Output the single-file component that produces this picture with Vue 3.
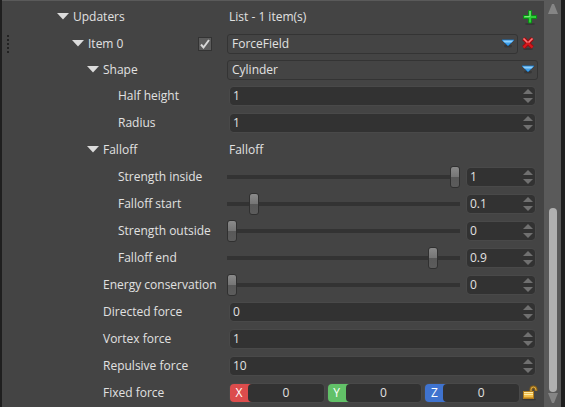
<script setup>
import { reactive } from 'vue'

const rows = reactive([
  { id: 'updaters', label: 'Updaters', level: 0, open: true, kind: 'list', text: 'List - 1 item(s)' },
  { id: 'item', label: 'Item 0', level: 1, open: true, kind: 'item', enabled: true, value: 'ForceField', options: ['ForceField', 'Gravity'] },
  { id: 'shape', label: 'Shape', level: 2, open: true, kind: 'select', value: 'Cylinder', options: ['Cylinder', 'Sphere', 'Torus'] },
  { id: 'half-height', label: 'Half height', level: 3, kind: 'number', value: 1 },
  { id: 'radius', label: 'Radius', level: 3, kind: 'number', value: 1 },
  { id: 'falloff', label: 'Falloff', level: 2, open: true, kind: 'text', text: 'Falloff' },
  { id: 'strength-inside', label: 'Strength inside', level: 3, kind: 'slider', value: 1 },
  { id: 'falloff-start', label: 'Falloff start', level: 3, kind: 'slider', value: 0.1 },
  { id: 'strength-outside', label: 'Strength outside', level: 3, kind: 'slider', value: 0 },
  { id: 'falloff-end', label: 'Falloff end', level: 3, kind: 'slider', value: 0.9 },
  { id: 'energy', label: 'Energy conservation', level: 2, kind: 'slider', value: 0 },
  { id: 'directed', label: 'Directed force', level: 2, kind: 'number', value: 0 },
  { id: 'vortex', label: 'Vortex force', level: 2, kind: 'number', value: 1 },
  { id: 'repulsive', label: 'Repulsive force', level: 2, kind: 'number', value: 10 },
  {
    id: 'fixed', label: 'Fixed force', level: 2, kind: 'vector',
    axes: [{ name: 'X', value: 0 }, { name: 'Y', value: 0 }, { name: 'Z', value: 0 }],
  },
])

function step(row, direction) {
  const size = row.kind === 'slider' ? 0.1 : 1
  const next = Math.round((Number(row.value) + direction * size) * 100) / 100
  row.value = row.kind === 'slider' ? Math.min(1, Math.max(0, next)) : next
}
</script>

<template>
  <div class="window">
    <main class="grid">
      <div v-for="row in rows" :key="row.id" class="row" :class="'row-' + row.kind">
        <div class="name" :class="'level-' + row.level">
          <span v-if="row.kind === 'item'" class="grip"></span>
          <button v-if="row.open" type="button" class="expander" :aria-label="'Collapse ' + row.label">
            <svg width="12" height="7" viewBox="0 0 12 7"><path d="M0 0H12L6 6.5Z" fill="#dcdcdc" /></svg>
          </button>
          <span v-if="row.kind === 'list' || row.kind === 'text' || row.kind === 'vector'" class="label">{{ row.label }}</span>
          <label v-else class="label" :for="row.id">{{ row.label }}</label>
          <input v-if="row.kind === 'item'" v-model="row.enabled" class="check" type="checkbox" aria-label="Enable Item 0" />
        </div>

        <div class="value">
          <template v-if="row.kind === 'list' || row.kind === 'text'">
            <span class="caption">{{ row.text }}</span>
            <button v-if="row.kind === 'list'" type="button" class="tool" aria-label="Add item">
              <svg width="14" height="16" viewBox="0 0 14 16">
                <ellipse cx="7" cy="15" rx="5" ry="1" fill="#303030" opacity=".7" />
                <path d="M5.5 1.5H8.5V6.5H13.5V9.5H8.5V14H5.5V9.5H.5V6.5H5.5Z" fill="#2fd03a" stroke="#0b8f14" stroke-width="1" />
                <path d="M7 2V7.5H1.5" fill="none" stroke="#7be57c" stroke-width="1" />
              </svg>
            </button>
          </template>

          <template v-else-if="row.kind === 'item' || row.kind === 'select'">
            <div class="combo">
              <select :id="row.id" v-model="row.value">
                <option v-for="o in row.options" :key="o">{{ o }}</option>
              </select>
              <svg class="drop" width="14" height="9" viewBox="0 0 14 9">
                <ellipse cx="7" cy="7" rx="4" ry="1.5" fill="#303030" opacity=".7" />
                <path d="M1 1H13L7.5 6.5H6.5Z" fill="#3f9fe8" stroke="#1b73bd" stroke-width="1" stroke-linejoin="round" />
                <path d="M1.5 1.5H12.5L10.5 3.5H3.5Z" fill="#8fd0fb" />
              </svg>
            </div>
            <button v-if="row.kind === 'item'" type="button" class="tool remove" aria-label="Remove item">
              <svg width="12" height="13" viewBox="0 0 12 13">
                <ellipse cx="6" cy="12" rx="5" ry="1" fill="#303030" opacity=".7" />
                <path d="M1.5 1.5L10.500 10.500M10.500 1.5L1.5 10.500" stroke="#9c0d10" stroke-width="4" />
                <path d="M1.500 1.500L10.500 10.500M10.500 1.500L1.500 10.500" stroke="#d8191d" stroke-width="2" />
                <path d="M1.500 1.500L5.500 5.500M10.500 1.500L6.500 5.500" stroke="#f5797a" stroke-width="1.500" />
              </svg>
            </button>
          </template>

          <template v-else-if="row.kind === 'number' || row.kind === 'slider'">
            <input v-if="row.kind === 'slider'" v-model.number="row.value" class="slider" type="range" min="0" max="1" step="0.01" :aria-label="row.label + ' slider'" />
            <div class="field">
              <input :id="row.id" v-model="row.value" type="number" step="any" />
              <div class="spin">
                <button type="button" :aria-label="'Increase ' + row.label" @click="step(row, 1)">
                  <svg width="10" height="5" viewBox="0 0 10 5"><path d="M0 5H10L5 0Z" fill="#707070" /></svg>
                </button>
                <button type="button" :aria-label="'Decrease ' + row.label" @click="step(row, -1)">
                  <svg width="10" height="5" viewBox="0 0 10 5"><path d="M0 0H10L5 5Z" fill="#707070" /></svg>
                </button>
              </div>
            </div>
          </template>

          <template v-else>
            <div v-for="axis in row.axes" :key="axis.name" class="axis" :class="'axis-' + axis.name">
              <label :for="'axis-' + axis.name">{{ axis.name }}</label>
              <input :id="'axis-' + axis.name" v-model="axis.value" type="number" />
            </div>
            <button type="button" class="tool lock" aria-label="Unlocked proportions">
              <svg width="16" height="16" viewBox="0 0 16 16">
                <ellipse cx="7" cy="14.5" rx="7" ry="1" fill="#303030" opacity=".7" />
                <path d="M9 7V4.5Q9 2 11.500 2Q14 2 14 5V6" fill="none" stroke="#8c6216" stroke-width="3" />
                <path d="M9 7V4.500Q9 2 11.500 2Q14 2 14 5V5.500" fill="none" stroke="#e3b34c" stroke-width="1" />
                <rect x="1.500" y="6.500" width="10" height="7" fill="#f0be4a" stroke="#b17d1d" />
                <path d="M2 7.500H11M2 9.500H11" stroke="#ffe9a3" />
                <path d="M2 12.500H11" stroke="#d6982a" />
              </svg>
            </button>
          </template>
        </div>
      </div>
    </main>

    <div class="scrollbar">
      <button type="button" aria-label="Scroll up">
        <svg width="10" height="10" viewBox="0 0 10 10"><path d="M0 10L4 0H6L10 10Z" fill="#858585" /></svg>
      </button>
      <div class="rail"><div class="handle"></div></div>
      <button type="button" aria-label="Scroll down">
        <svg width="10" height="10" viewBox="0 0 10 10"><path d="M0 0L4 10H6L10 0Z" fill="#858585" /></svg>
      </button>
    </div>
  </div>
</template>

<style>
body {
  background: #1f1f1f;
}
</style>

<style scoped>
.window {
  display: flex;
  box-sizing: border-box;
  min-height: 100vh;
  padding: 0 4px 0 2px;
  background: #1f1f1f;
  color: #e1e1e1;
  font: 12px/16px "Open Sans", "Noto Sans", sans-serif;
}
.window * {
  box-sizing: border-box;
}
button {
  display: flex;
  align-items: center;
  justify-content: center;
  padding: 0;
  border: 0;
  background: none;
}
svg {
  display: block;
}
input,
select {
  margin: 0;
  color: inherit;
  font: inherit;
}
.grid {
  flex: 1;
  min-width: 0;
  padding-top: 2px;
  border-top: 1px solid #5a5a5a;
  background: #444;
}
.row {
  display: grid;
  grid-template-columns: 225px minmax(0, 1fr);
  height: 27px;
}
.row-select {
  height: 25px;
}
.name {
  position: relative;
  display: flex;
  align-items: center;
  white-space: nowrap;
}
.level-0 { padding-left: 55px; }
.level-1 { padding-left: 70px; }
.level-2 { padding-left: 85px; }
.level-3 { padding-left: 116px; }
.level-2 > .label:first-child {
  padding-left: 16px;
}
.expander {
  width: 12px;
  margin-right: 4px;
}
.grip {
  position: absolute;
  left: 5px;
  width: 2px;
  height: 18px;
  background: repeating-linear-gradient(#222 0 2px, transparent 2px 4px);
}
.check {
  appearance: none;
  width: 14px;
  height: 14px;
  margin: 0 15px 0 auto;
  border: 1px solid #333;
  background: #5c5c5c;
}
.check:checked {
  background: #5c5c5c url("data:image/svg+xml,%3Csvg xmlns='http://www.w3.org/2000/svg' viewBox='0 0 12 12'%3E%3Cpath d='M2 6.500L4.500 9.500L10 2' fill='none' stroke='%23d8d8d8' stroke-width='2'/%3E%3C/svg%3E");
}
.value {
  display: flex;
  align-items: center;
  min-width: 0;
  padding-right: 9px;
}
.caption {
  flex: 1;
  padding-left: 2px;
}
.row-list .value,
.row-item .value,
.row-select .value,
.row-vector .value {
  padding-right: 6px;
}
.tool {
  width: 16px;
  height: 18px;
}
.remove {
  width: 12px;
  margin: 0 4px;
}
.combo {
  position: relative;
  flex: 1;
  min-width: 0;
}
.combo select {
  display: block;
  appearance: none;
  width: 100%;
  height: 20px;
  padding: 0 24px 0 4px;
  border: 1px solid #343434;
  border-radius: 3px;
  background: #444;
}
.drop {
  position: absolute;
  top: 5px;
  right: 3px;
  pointer-events: none;
}
.field {
  display: flex;
  flex: 1;
  align-items: center;
  height: 18px;
  margin-left: 3px;
  padding-right: 2px;
  border-radius: 4px;
  background: #323232;
  box-shadow: 0 0 0 1px #494949;
}
.row-slider .field {
  flex: 0 0 68px;
  margin-left: 7px;
}
input[type="number"] {
  appearance: textfield;
  flex: 1;
  width: 0;
  min-width: 0;
  height: 18px;
  padding: 0 0 0 3px;
  border: 0;
  outline: 0;
  background: none;
}
input[type="number"]::-webkit-inner-spin-button {
  appearance: none;
  margin: 0;
}
.spin {
  display: flex;
  flex-direction: column;
  gap: 4px;
}
.slider {
  appearance: none;
  flex: 1;
  min-width: 0;
  height: 22px;
  background: linear-gradient(#333, #333) center / 100% 4px no-repeat;
}
.slider::-webkit-slider-thumb {
  appearance: none;
  width: 10px;
  height: 22px;
  border: 1px solid #303030;
  border-radius: 3px;
  background: linear-gradient(#8a8a8a, #757575 50%, #585858 50%, #5c5c5c);
}
.axis {
  display: flex;
  flex: 1;
  min-width: 0;
  height: 18px;
  margin-left: 4px;
  border-radius: 4px;
  box-shadow: 0 0 0 1px #494949;
}
.axis:first-child {
  margin-left: 3px;
}
.axis label {
  width: 22px;
  margin-right: -4px;
  padding-right: 4px;
  border-radius: 4px 0 0 4px;
  color: #fff;
  line-height: 18px;
  text-align: center;
}
.axis input[type="number"] {
  padding: 0;
  border-radius: 4px;
  background: #323232;
  text-align: center;
}
.axis-X label { background: #dc4c4c; }
.axis-Y label { background: #62c168; }
.axis-Z label { background: #3f73cf; }
.lock {
  margin-left: 3px;
}
.scrollbar {
  display: flex;
  flex-direction: column;
  align-items: center;
  width: 17px;
  padding: 4px 0;
  background: #5a5a5a;
}
.rail {
  display: grid;
  flex: 1;
  grid-template-rows: 193fr 183fr;
  margin: 0 0 1px;
}
.handle {
  grid-row: 2;
  width: 8px;
  border-radius: 4px;
  background: #b0b0b0;
}
</style>
